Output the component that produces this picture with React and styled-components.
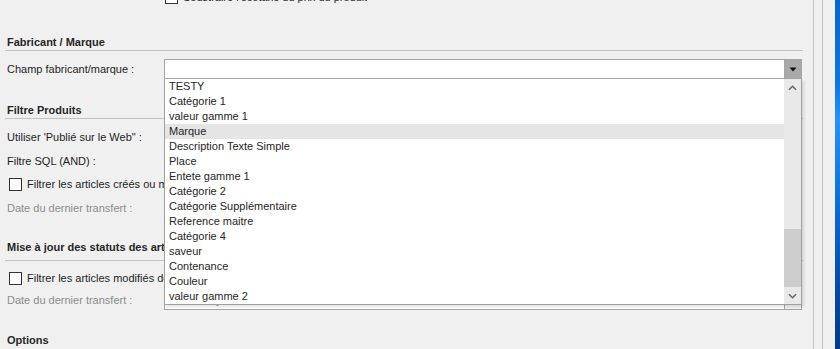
import { createGlobalStyle } from "styled-components";
import styled from "styled-components";

const GlobalStyle = createGlobalStyle`
  html, body {
    margin: 0;
    padding: 0;
    background: #f0f0f0;
  }
  body {
    font-family: "Liberation Sans", Arial, sans-serif;
    font-size: 11px;
    color: #1e1e1e;
  }
`;

const Screen = styled.div`
  display: flex;
  width: 840px;
  height: 349px;
  overflow: hidden;
  background: #f0f0f0;
`;

const Panel = styled.div`
  flex: none;
  width: 808px;
  padding: 0 0 0 5px;
  display: flex;
  flex-direction: column;
`;

const Form = styled.div`
  width: 798px;
  display: flex;
  flex-direction: column;
`;

const Gutter = styled.div`
  flex: none;
  width: 8px;
  border-left: 1px solid #c4c4c4;
  border-right: 1px solid #c4c4c4;
`;

const Frame = styled.div`
  flex: none;
  width: 12px;
`;

const Desktop = styled.div`
  flex: 1;
  background: linear-gradient(
    180deg,
    #0b63c9 0%,
    #1277df 25%,
    #2a93f2 34%,
    #1a82e8 45%,
    #0c62c7 65%,
    #08479c 85%,
    #063a84 100%
  );
`;

const SectionTitle = styled.div`
  margin-top: ${(p) => p.$top}px;
  padding: 0 0 ${(p) => p.$pad || 0}px 2px;
  height: 16px;
  line-height: 16px;
  font-weight: 700;
  color: #262626;
  border-bottom: 1px solid #c2c2c2;
  box-sizing: content-box;
`;

/* title text that runs under the open list is cut where the list starts */
const TitleText = styled.span`
  display: inline-block;
  max-width: ${(p) => (p.$clip ? "157px" : "none")};
  overflow: hidden;
  white-space: nowrap;
  vertical-align: top;
`;

const Row = styled.div`
  position: relative;
  margin-top: ${(p) => p.$top}px;
  height: 20px;
  display: flex;
  align-items: center;
  padding-left: ${(p) => p.$indent || 2}px;
`;

const Label = styled.span`
  flex: none;
  width: ${(p) => (p.$wide ? "auto" : "157px")};
  max-width: ${(p) => (p.$clip ? `${p.$clip}px` : "none")};
  overflow: hidden;
  white-space: nowrap;
  color: ${(p) => (p.$muted ? "#8c8c8c" : "#1e1e1e")};
`;

const CheckBox = styled.span`
  flex: none;
  width: 11px;
  height: 11px;
  margin: 0 5px 0 2px;
  border: 1px solid #333;
  background: #fff;
`;

const Field = styled.div`
  flex: none;
  position: relative;
  width: 638px;
  height: 20px;
  box-sizing: border-box;
  border: 1px solid #a6a6a6;
  background: #fff;
  display: flex;
  align-items: center;
  padding-left: 4px;
  color: #8c8c8c;
`;

const DropButton = styled.span`
  position: absolute;
  top: 0;
  right: 0;
  bottom: 0;
  width: 16px;
  background: ${(p) => (p.$open ? "#a9a9a9" : "#f0f0f0")};
  border-left: 1px solid #a6a6a6;
  display: flex;
  align-items: center;
  justify-content: center;
`;

const DropList = styled.div`
  position: absolute;
  top: 20px;
  left: 159px;
  width: 636px;
  height: 225px;
  box-sizing: content-box;
  border: 1px solid #a0a0a0;
  border-top: none;
  background: #fff;
  display: flex;
  box-shadow: 2px 2px 3px rgba(0, 0, 0, 0.12);
  z-index: 5;
`;

const Items = styled.div`
  flex: 1;
  display: flex;
  flex-direction: column;
`;

const Item = styled.div`
  height: 15px;
  line-height: 15px;
  padding-left: 4px;
  color: #262626;
  white-space: nowrap;
  background: ${(p) => (p.$active ? "#e5e5e5" : "transparent")};
`;

const ScrollBar = styled.div`
  flex: none;
  width: 17px;
  display: flex;
  flex-direction: column;
  background: #e9e9e9;
`;

const ScrollArrow = styled.div`
  flex: none;
  height: 17px;
  display: flex;
  align-items: center;
  justify-content: center;
`;

const Track = styled.div`
  flex: 1;
  display: flex;
  flex-direction: column;
  justify-content: flex-end;
`;

const Thumb = styled.div`
  height: 58px;
  background: #cdcdcd;
`;

const items = [
  "TESTY",
  "Catégorie 1",
  "valeur gamme 1",
  "Marque",
  "Description Texte Simple",
  "Place",
  "Entete gamme 1",
  "Catégorie 2",
  "Catégorie Supplémentaire",
  "Reference maitre",
  "Catégorie 4",
  "saveur",
  "Contenance",
  "Couleur",
  "valeur gamme 2",
];

function Triangle() {
  return (
    <svg width="8" height="5" viewBox="0 0 8 5">
      <path d="M0.5 0.5h7L4 4.5z" fill="#111" />
    </svg>
  );
}

function Chevron({ down }) {
  return (
    <svg width="9" height="6" viewBox="0 0 9 6">
      <path
        d={down ? "M1 1.2l3.5 3.5L8 1.2" : "M1 4.8l3.5-3.5L8 4.8"}
        fill="none"
        stroke="#6a6a6a"
        strokeWidth="1.6"
      />
    </svg>
  );
}

export default function App() {
  return (
    <>
      <GlobalStyle />
      <Screen>
        <Panel>
          <Form>
            <Row $top={-13} $indent={158}>
              <CheckBox />
              <Label $wide>Soustraire l'écotaxe du prix du produit</Label>
            </Row>

            <SectionTitle $top={27}>
              <TitleText>Fabricant / Marque</TitleText>
            </SectionTitle>
            <Row $top={8}>
              <Label>Champ fabricant/marque :</Label>
              <Field>
                <DropButton $open>
                  <Triangle />
                </DropButton>
              </Field>
              <DropList>
                <Items>
                  {items.map((it) => (
                    <Item key={it} $active={it === "Marque"}>
                      {it}
                    </Item>
                  ))}
                </Items>
                <ScrollBar>
                  <ScrollArrow>
                    <Chevron />
                  </ScrollArrow>
                  <Track>
                    <Thumb />
                  </Track>
                  <ScrollArrow>
                    <Chevron down />
                  </ScrollArrow>
                </ScrollBar>
              </DropList>
            </Row>

            <SectionTitle $top={23}>
              <TitleText>Filtre Produits</TitleText>
            </SectionTitle>
            <Row $top={8}>
              <Label>Utiliser 'Publié sur le Web" :</Label>
            </Row>
            <Row $top={4}>
              <Label>Filtre SQL (AND) :</Label>
            </Row>
            <Row $top={3}>
              <CheckBox />
              <Label $wide $clip={139}>
                Filtrer les articles créés ou modifiés depuis le dernier transfert
              </Label>
            </Row>
            <Row $top={4}>
              <Label $muted>Date du dernier transfert :</Label>
            </Row>

            <SectionTitle $top={21} $pad={5}>
              <TitleText $clip>Mise à jour des statuts des articles</TitleText>
            </SectionTitle>
            <Row $top={7}>
              <CheckBox />
              <Label $wide $clip={139}>
                Filtrer les articles modifiés depuis le dernier transfert
              </Label>
            </Row>
            <Row $top={2}>
              <Label $muted>Date du dernier transfert :</Label>
              <Field>
                samedi 1 janvier 2000
                <DropButton />
              </Field>
            </Row>

            <SectionTitle $top={22} $pad={3}>
              <TitleText>Options</TitleText>
            </SectionTitle>
          </Form>
        </Panel>
        <Gutter />
        <Frame />
        <Desktop />
      </Screen>
    </>
  );
}
